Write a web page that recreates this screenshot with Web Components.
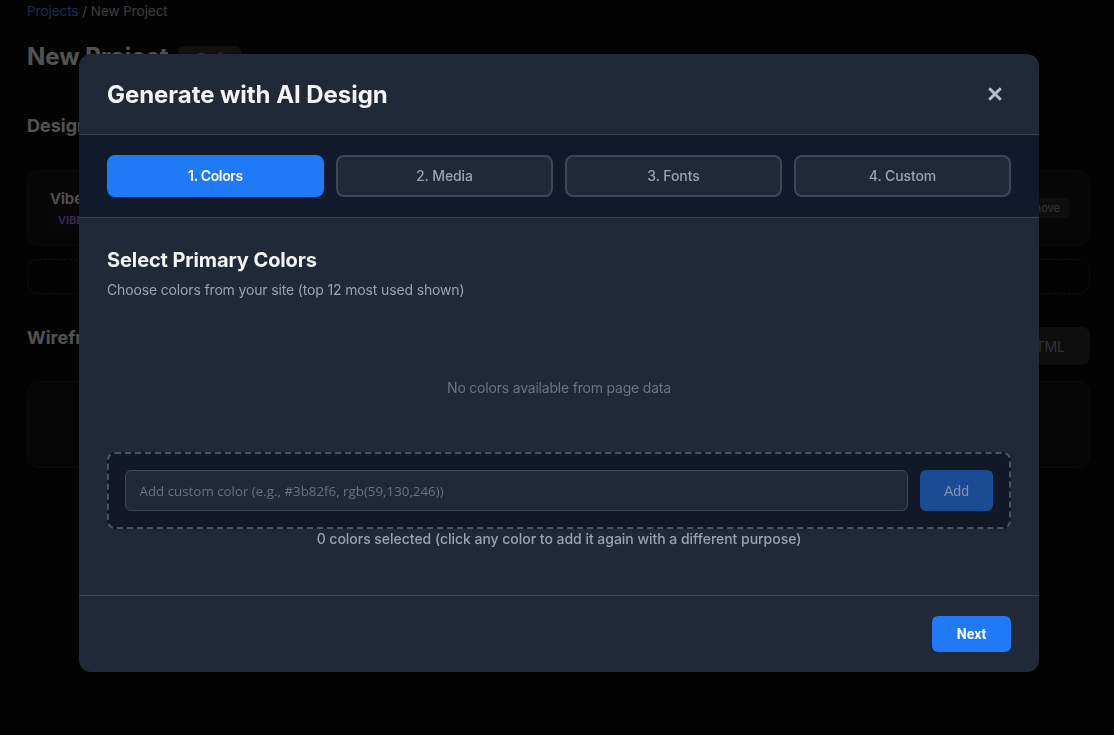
<!DOCTYPE html>
<html lang="en">
<head>
<meta charset="utf-8">
<title>New Project</title>
<style>
  html, body { margin: 0; height: 100%; background: #0c0c0c; overflow: hidden; }
  body { font-family: Inter, "Liberation Sans", sans-serif; }
</style>
</head>
<body>
<project-page></project-page>
<ai-modal heading="Generate with AI Design">
  <step-tab active style="letter-spacing:-.35px">1. Colors</step-tab>
  <step-tab>2. Media</step-tab>
  <step-tab>3. Fonts</step-tab>
  <step-tab>4. Custom</step-tab>
  <color-step slot="body"></color-step>
  <next-button slot="footer">Next</next-button>
</ai-modal>

<script>
  // page behind the modal
  class ProjectPage extends HTMLElement {
    connectedCallback() {
      this.attachShadow({mode:'open'})
      this.shadowRoot.innerHTML = `
      <style>
        :host { display:flex; flex-direction:column; padding:0 24px 0 27px; color:#fff; }
        .crumbs { font-size:13.5px; line-height:18px; margin-top:2px; color:#bbb; letter-spacing:-.05px; }
        .crumbs a { color:#4a8cff; }
        .title { display:flex; align-items:flex-start; gap:9px; margin-top:19px; }
        h1 { font-size:24px; line-height:36px; margin:0; font-weight:700; }
        .draft { margin-top:7px; width:63px; height:24px; border-radius:6px; background:#363636; box-sizing:border-box; padding:3px 8px;
          display:flex; align-items:center; gap:4px; font-size:12px; line-height:16px; color:#999; }
        .draft i { width:8px; height:8px; border-radius:50%; background:#999; }
        h2 { font-size:18px; line-height:26px; margin:0; font-weight:700; }
        .head1 { margin-top:38px; }
        .card { margin-top:31px; height:76px; border:1px solid #242424; background:#131313; border-radius:12px; box-sizing:border-box; padding:0 20px 0 22px;
          display:flex; justify-content:space-between; align-items:center; }
        .card b { display:block; font-size:15px; font-weight:600; }
        .vibe { display:inline-block; margin-top:3px; padding:1px 8px; font-size:11px; font-weight:600; border-radius:4px; color:#a78bfa; background:#1a1528; }
        .remove { font-size:11px; padding:3px 9px; background:#2e2e2e; color:#aaa; border-radius:4px; }
        .dashed { margin-top:13px; height:35px; border:1px dashed #333; border-radius:12px; box-sizing:border-box; }
        .row { margin-top:33px; display:flex; justify-content:space-between; align-items:flex-start; height:38px; }
        .row h2 { margin-top:-2px; }
        .html { width:120px; height:38px; box-sizing:border-box; background:#2c2c2c; border-radius:8px; color:#999; font-size:14px;
          display:flex; align-items:center; justify-content:flex-end; padding-right:25px; }
        .empty { margin-top:16px; height:87px; border:1px solid #222; background:#101010; border-radius:12px; box-sizing:border-box; }
      </style>
      <div class="crumbs"><a>Projects</a> / New Project</div>
      <div class="title"><h1>New Project</h1><div class="draft"><i></i>Draft</div></div>
      <h2 class="head1">Design</h2>
      <div class="card">
        <div><b>Vibe</b><span class="vibe">VIBE</span></div>
        <span class="remove">Remove</span>
      </div>
      <div class="dashed"></div>
      <div class="row"><h2>Wireframes</h2><div class="html">HTML</div></div>
      <div class="empty"></div>`
    }
  }

  class AiModal extends HTMLElement {
    connectedCallback() {
      this.attachShadow({mode:'open'})
      this.shadowRoot.innerHTML = `
      <style>
        :host { position:fixed; inset:0; display:block; background:rgba(0,0,0,.68); padding:54px 0 0 79px; box-sizing:border-box; }
        .box { width:960px; height:618px; background:#1f2937; border-radius:12px; display:flex; flex-direction:column; overflow:hidden; color:#f3f4f6; }
        header { height:80px; box-sizing:border-box; padding:0 28px; display:flex; align-items:center; justify-content:space-between; }
        h2 { margin:0; font-size:24px; font-weight:700; color:#f3f4f6; letter-spacing:-.05px; }
        .close { width:32px; height:32px; display:flex; align-items:center; justify-content:center; }
        nav { border-top:1px solid #3b4656; border-bottom:1px solid #3b4656; background:#111a2b; padding:20px 28px; display:grid; grid-template-columns:repeat(4,1fr); gap:12px; }
        main { flex:1; min-height:0; padding:28px 28px 0; }
        footer { height:77px; box-sizing:border-box; border-top:1px solid #3b4656; padding:20px 28px; display:flex; justify-content:flex-end; }
      </style>
      <div class="box">
        <header>
          <h2>${this.getAttribute('heading')}</h2>
          <div class="close">
            <svg width="16" height="16" viewBox="0 0 16 16"><path d="M2.2 2.2 13.8 13.8M13.8 2.2 2.2 13.8" stroke="#b6bec9" stroke-width="2.9" fill="none"/></svg>
          </div>
        </header>
        <nav><slot></slot></nav>
        <main><slot name="body"></slot></main>
        <footer><slot name="footer"></slot></footer>
      </div>`
    }
  }

  class StepTab extends HTMLElement {
    connectedCallback() {
      this.attachShadow({mode:'open'})
      this.shadowRoot.innerHTML = `
      <style>
        :host { display:flex; height:42px; box-sizing:border-box; padding-bottom:1px; align-items:center; justify-content:center; border-radius:8px;
          border:2px solid #3d4757; background:#1f2937; color:#9ca3af; font-size:14px; font-weight:500; letter-spacing:-.1px; }
        :host([active]) { background:#2079f6; border-color:#2079f6; color:#fff; font-weight:600; }
      </style>
      <slot></slot>`
    }
  }

  class ColorStep extends HTMLElement {
    connectedCallback() {
      this.attachShadow({mode:'open'})
      this.shadowRoot.innerHTML = `
      <style>
        :host { display:block; }
        h3 { margin:0; font-size:20px; line-height:28px; font-weight:700; color:#f3f4f6; letter-spacing:-.1px; }
        p { margin:6px 0 0; font-size:14px; line-height:20px; color:#9ca3af; letter-spacing:-.15px; }
        .none { height:134px; display:flex; align-items:center; justify-content:center; padding-top:40px; box-sizing:border-box; font-size:14px; color:#6b7280; letter-spacing:-.2px; }
        .add { margin-top:18px; height:77px; box-sizing:border-box; border:2px dashed #475569; border-radius:8px; background:#111827;
          padding:16px; display:flex; gap:12px; }
        input { flex:1; min-width:0; box-sizing:border-box; height:41px; border:1px solid #3d4757; border-radius:6px; background:#1f2937; padding:0 14px 0 13.5px;
          font:13.333px "Open Sans", sans-serif; color:#fff; outline:none; }
        input::placeholder { color:#6b7280; opacity:1; }
        button { width:73px; height:41px; border:0; border-radius:6px; background:#1b4b93; color:#8794a6; font:14px "Liberation Sans", sans-serif; }
        .count { text-align:center; font-size:14px; line-height:20px; font-weight:500; color:#9ca3af; letter-spacing:-.03px; }
      </style>
      <h3>Select Primary Colors</h3>
      <p>Choose colors from your site (top 12 most used shown)</p>
      <div class="none">No colors available from page data</div>
      <div class="add">
        <input placeholder="Add custom color (e.g., #3b82f6, rgb(59,130,246))">
        <button disabled>Add</button>
      </div>
      <div class="count">0 colors selected (click any color to add it again with a different purpose)</div>`
    }
  }

  class NextButton extends HTMLElement {
    connectedCallback() {
      this.attachShadow({mode:'open'})
      this.shadowRoot.innerHTML = `
      <style>
        :host { display:flex; width:79px; height:36px; align-items:center; justify-content:center; border-radius:6px; background:#2079f6; color:#fff;
          font:700 14px Roboto, sans-serif; }
      </style>
      <slot></slot>`
    }
  }

  customElements.define('project-page', ProjectPage)
  customElements.define('step-tab', StepTab)
  customElements.define('color-step', ColorStep)
  customElements.define('next-button', NextButton)
  customElements.define('ai-modal', AiModal)
</script>
</body>
</html>
